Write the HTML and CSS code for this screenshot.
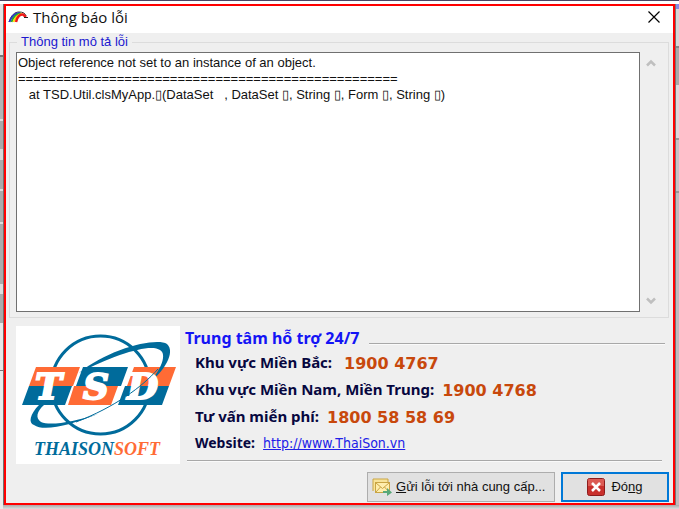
FILE: index.html
```html
<!DOCTYPE html>
<html lang="vi">
<head>
<meta charset="utf-8">
<title>Thông báo lỗi</title>
<link rel="stylesheet" href="styles.css">
</head>
<body>
<div class="backdrop" aria-hidden="true">
  <div class="strip strip-left"></div>
  <div class="strip strip-right"></div>
  <div class="strip strip-bottom"></div>
</div>
<main class="dialog" role="dialog" aria-labelledby="title">
  <header class="titlebar">
    <svg class="rainbow" viewBox="0 0 20 12" aria-hidden="true">
      <g fill="none">
        <path d="M1 11C3 4 7 1 11 1s6 1 7 4" stroke="#333" stroke-width="1"/>
        <path d="M1.500 11C3.500 5 7 2 12 2" stroke="#3030d0" stroke-width="2"/>
        <path d="M3.500 11C5 6 8 3 13 2.500" stroke="#25a63a" stroke-width="2"/>
        <path d="M5.500 11C7 7 9 4 14 3" stroke="#ffe000" stroke-width="2"/>
        <path d="M8 11C9 6 12 3 15 3.500L18 6" stroke="#f01818" stroke-width="2.500"/>
        <path d="M16 6.500h4" stroke="#222" stroke-width="1"/>
      </g>
    </svg>
    <h1 id="title">Thông báo lỗi</h1>
    <button class="close" type="button" aria-label="Close">
      <svg viewBox="0 0 12 12"><path d="M0.500 0.500l11 11M11.500 0.500l-11 11" fill="none" stroke="#000" stroke-width="1.200"/></svg>
    </button>
  </header>

  <fieldset class="details">
    <legend><label for="log">Thông tin mô tả lỗi</label></legend>
    <div class="log-row">
      <textarea id="log" readonly spellcheck="false">Object reference not set to an instance of an object.
==================================================
   at TSD.Util.clsMyApp.▯(DataSet   , DataSet ▯, String ▯, Form ▯, String ▯)</textarea>
      <div class="scroll" aria-hidden="true">
        <svg viewBox="0 0 10 8"><path d="M1 6.500L5 2.500l4 4" fill="none" stroke="#bfbfbf" stroke-width="2.500"/></svg>
        <svg viewBox="0 0 10 8"><path d="M1 1.500l4 4 4-4" fill="none" stroke="#bfbfbf" stroke-width="2.500"/></svg>
      </div>
    </div>
  </fieldset>

  <section class="support">
    <svg class="logo" viewBox="0 0 164 138" role="img" aria-label="Thaisonsoft">
      <rect width="164" height="138" fill="#fff"/>
      <circle cx="84.500" cy="59" r="49" fill="none" stroke="#006b9b" stroke-width="3"/>
      <path d="M19 41h124l-13 38H6z" fill="#fff"/>
      <path d="M20 41h44l-7 19H13z M58 60h44l-7 19H52z M118 41h42l-7 19h-42z" fill="#ff6b35"/>
      <path d="M13 60h43l-7 19H6z M67 41h45l-7 19H60z M109 60h44l-7 19h-44z" fill="#006b9b"/>
      <path d="M63 47C92 23 140 11 151 18C160 26 148 46 132 58C146 43 151 28 144 24C134 17 98 29 63 47z" fill="#006b9b"/>
      <path d="M23 79C14 88 12 97 18 99C28 106 55 99 82 88C58 96 34 100 25 96C19 92 21 85 28 79z" fill="#006b9b"/>
      <g class="logo-letters"><text x="19" y="73">T</text><text x="67" y="73">S</text><text x="111" y="73">D</text></g>
      <path d="M60 96C99 81 126 61 142 43" fill="none" stroke="#006b9b" stroke-width="1"/>
      <text class="logo-name" x="18" y="129"><tspan fill="#006b9b">THAISON</tspan><tspan fill="#ff6b35">SOFT</tspan></text>
    </svg>
    <div class="contact">
      <div class="heading"><h2>Trung tâm hỗ trợ 24/7</h2><hr></div>
      <dl>
        <div class="line"><dt>Khu vực Miền Bắc:</dt><dd>1900 4767</dd></div>
        <div class="line near"><dt>Khu vực Miền Nam, Miền Trung:</dt><dd>1900 4768</dd></div>
        <div class="line near"><dt>Tư vấn miễn phí:</dt><dd>1800 58 58 69</dd></div>
        <div class="line site"><dt>Website:</dt><dd><a href="http://www.ThaiSon.vn">http://www.ThaiSon.vn</a></dd></div>
      </dl>
      <hr class="rule">
    </div>
  </section>

  <footer class="actions">
    <button class="btn send" type="button">
      <svg viewBox="0 0 20 18" aria-hidden="true">
        <path d="M1 13V1h15v3" fill="#f8e49a" stroke="#c9a544"/>
        <rect x="3.500" y="4.500" width="14" height="10" fill="#ffeead" stroke="#c9a544"/>
        <path d="M4 5l6.500 5.500L17 5M4 14l4.500-5M17 14l-4.500-5" fill="none" stroke="#c9a544"/>
        <path d="M11 13h4v-3l5 4.500-5 3.500v-3h-4z" fill="#58a878"/>
      </svg>
      <span><u>G</u>ửi lỗi tới nhà cung cấp...</span>
    </button>
    <button class="btn primary" type="button">
      <svg viewBox="0 0 18 18" aria-hidden="true">
        <rect x="0.500" y="0.500" width="17" height="17" rx="2" fill="#c9302c" stroke="#8c1c1c"/>
        <path d="M1 2q0-1 1-1h14q1 0 1 1v6H1z" fill="#dc5b54"/>
        <path d="M5 5l8 8M13 5l-8 8" stroke="#fff" stroke-width="2.500"/>
      </svg>
      <span>Đó<u>n</u>g</span>
    </button>
  </footer>
</main>
</body>
</html>
```
FILE: styles.css
```css
* { box-sizing: border-box; }

body {
  margin: 0;
  min-height: 100vh;
  padding: 3px 4px 4px;
  display: flex;
  background: #fff;
  border-top: 1px solid #4a4664;
  font: 13px/16px "Liberation Sans", Arial, sans-serif;
  color: #111;
}

.backdrop { position: absolute; inset: 0; overflow: hidden; z-index: -1; }
.strip { position: absolute; }
.strip-left {
  left: 0; top: 4px; bottom: 0; width: 4px;
  border-right: 1px solid #707070;
  background: linear-gradient(#e4e4e4 51px, #777 51px 53px, #b4b4b4 53px 115px, #ddd 115px 117px, #aaa 117px 145px, #d8d8d8 145px 156px, #aaa 156px 185px, #ddd 185px 187px, #aaa 187px 218px, #ddd 218px 220px, #aaa 220px 280px, #ddd 280px 290px, #aaa 290px 319px, #e8e8e8 319px 366px, #777 366px 367px, #eaeaea 367px);
}
.strip-right {
  right: 0; top: 4px; bottom: 0; width: 4px;
  border-left: 1px solid #777;
  background: linear-gradient(#8888e8 5px, #d8d8d8 5px 42px, #888 42px 44px, #aaa 44px 81px, #e0d8dc 81px 134px, #999 134px 136px, #c8c4c6 136px 187px, #999 187px 189px, #c0bcbe 189px);
}
.strip-bottom { left: 3px; right: 0; bottom: 0; height: 4px; background: linear-gradient(#aaa, #ddd); }

.dialog {
  flex: 1;
  min-width: 0;
  display: flex;
  flex-direction: column;
  border: 2px solid #f00;
  background: #efefef;
}

.titlebar {
  display: flex;
  align-items: center;
  height: 27px;
  padding: 0 13px 5px 2px;
  background: #fff;
}
.rainbow { width: 20px; height: 12px; }
h1 {
  flex: 1;
  margin: 0 0 0 5px;
  font: 15px/20px "Open Sans", "Noto Sans", sans-serif;
}
.close { display: flex; padding: 0; border: 0; background: none; }
.close svg { width: 12px; height: 12px; }

.details {
  flex: 1;
  display: flex;
  flex-direction: column;
  min-width: 0;
  margin: 1px 4px 0 3px;
  padding: 2px 12px 5px 6px;
  border: 1px solid #dcdcdc;
}
.details legend {
  margin-left: 1px;
  padding: 0 4px;
  color: #2018d0;
}
.log-row { flex: 1; display: flex; height: 100%; }
textarea {
  flex: 1;
  min-width: 0;
  margin: 0;
  padding: 2px 1px;
  border: 1px solid #707070;
  border-radius: 0;
  outline: 0;
  resize: none;
  overflow: hidden;
  background: #fff;
  color: #111;
  font: inherit;
}
.scroll {
  display: flex;
  flex-direction: column;
  justify-content: space-between;
  padding: 7px 0 7px 6px;
}
.scroll svg { width: 10px; height: 8px; }

.support { display: flex; gap: 4px; padding: 8px 8px 0 10px; }
.logo { width: 164px; height: 138px; flex: none; }
.logo-letters {
  font: italic bold 36px "DejaVu Serif", serif;
  fill: #fff;
  stroke: #fff;
  stroke-width: 2px;
}
.logo-name { font: italic bold 18px "Liberation Serif", serif; }

.contact { flex: 1; min-width: 0; }
.heading { display: flex; align-items: flex-end; gap: 10px; height: 24px; }
h2 { margin: 0; padding-left: 1px; font: bold 16px/24px "Noto Sans", sans-serif; color: #1414f5; }
hr { margin: 0; border: 0; height: 2px; background: #a8a8a8; border-bottom: 1px solid #fafafa; }
.heading hr { flex: 1; margin-bottom: 5px; }
dl { margin: -2px 0 0; padding-left: 11px; }
.line { display: flex; align-items: center; gap: 12px; height: 27px; }
.near { gap: 8px; }
.site { gap: 8px; }
dt { font: bold 15px/24px "Noto Sans", sans-serif; color: #07073f; }
dd { margin: 0; padding-top: 4px; font: bold 16px/22px "DejaVu Sans", sans-serif; color: #c8480c; }
.site dt { font-size: 14px; }
.site dd { padding: 0; font: 14px/24px "DejaVu Sans Condensed", "Noto Sans", sans-serif; }
a { color: #2020e8; }
.rule { margin: 4px 3px 0 3px; }

.actions {
  display: flex;
  justify-content: flex-end;
  gap: 6px;
  padding: 8px 4px 1px 0;
}
.btn {
  display: flex;
  align-items: center;
  justify-content: center;
  height: 30px;
  padding: 0 4px;
  border: 1px solid #adadad;
  border-radius: 0;
  background: #e1e1e1;
  color: #111;
  font: inherit;
  white-space: nowrap;
}
.send { width: 188px; gap: 4px; justify-content: flex-start; }
.send svg { width: 20px; height: 18px; flex: none; }
.primary { width: 108px; gap: 6px; border: 2px solid #0078d7; }
.primary svg { width: 18px; height: 18px; }
```
